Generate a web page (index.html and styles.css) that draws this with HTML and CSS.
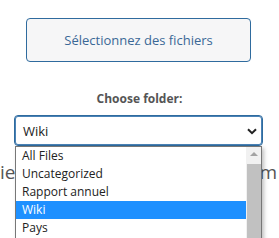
FILE: index.html
```html
<!DOCTYPE html>
<html lang="fr">
  <head>
    <meta charset="UTF-8" />
    <meta name="viewport" content="width=device-width, initial-scale=1.0" />
    <title>Upload</title>
    <link rel="stylesheet" href="styles.css">
  </head>
  <body>
    <div class="uploader">
      <button class="pick-btn">Sélectionnez des fichiers</button>

      <div class="folder">
        <label class="folder-label" for="folder">Choose folder:</label>
        <div class="select-box" id="folder">
          <span>Wiki</span>
          <svg class="chevron" width="10" height="7" viewBox="0 0 10 7">
            <path d="M1 1.2 L5 5.2 L9 1.2" fill="none" stroke="#222" stroke-width="2" />
          </svg>
        </div>

        <!-- open options list of the select -->
        <div class="options">
          <ul>
            <li>All Files</li>
            <li>Uncategorized</li>
            <li>Rapport annuel</li>
            <li class="selected">Wiki</li>
            <li>Pays</li>
          </ul>
          <div class="scrollbar">
            <span class="arrow"></span>
            <span class="thumb"></span>
          </div>
        </div>
      </div>

      <p class="hint"><span>ie</span><span>m</span></p>
    </div>
  </body>
</html>
```

FILE: styles.css
```css
* {
  margin: 0;
  padding: 0;
  box-sizing: border-box;
  font-family: "Open Sans", "Noto Sans", sans-serif;
}

body {
  background-color: white;
  width: 279px;
  height: 238px;
  overflow: hidden;
}

.uploader {
  padding-top: 18px;
}

.pick-btn {
  display: block;
  width: 225px;
  height: 44px;
  margin-left: 26px;
  background-color: #f6f6f7;
  border: 1px solid #2f6b9e;
  border-radius: 4px;
  color: #3a6896;
  font-size: 13px;
}

.folder {
  position: relative;
  margin-top: 29px;
}

.folder-label {
  display: block;
  text-align: center;
  font-size: 12px;
  font-weight: bold;
  color: #555;
  line-height: 16px;
  margin-bottom: 8px;
}

.select-box {
  display: flex;
  align-items: center;
  justify-content: space-between;
  margin-left: 14px;
  width: 249px;
  height: 31px;
  padding: 0 5px 0 8px;
  border: 1px solid #2f6b9e;
  box-shadow: inset 0 0 0 1px #4a82b6;
  border-radius: 4px;
  font-size: 13px;
  color: #222;
}

.chevron {
  margin-top: 1px;
}

.options {
  position: absolute;
  top: 55px;
  left: 15px;
  width: 247px;
  height: 100px;
  display: flex;
  background-color: white;
  border: 1px solid #777;
  border-bottom: none;
  box-shadow: 2px 2px 4px rgba(0, 0, 0, 0.25);
  z-index: 2;
}

.options ul {
  flex: 1;
  list-style: none;
}

.options li {
  height: 18px;
  line-height: 18px;
  padding-left: 6px;
  font-size: 12px;
  color: #222;
}

.options li.selected {
  background-color: #1e90ff;
  color: white;
}

.scrollbar {
  width: 15px;
  background-color: #f1f1f1;
  display: flex;
  flex-direction: column;
  align-items: center;
}

.arrow {
  margin-top: 5px;
  width: 0;
  height: 0;
  border-left: 4px solid transparent;
  border-right: 4px solid transparent;
  border-bottom: 4px solid #a3a3a3;
}

.thumb {
  margin-top: 8px;
  width: 14px;
  flex: 1;
  background-color: #c1c1c1;
}

.hint {
  display: flex;
  justify-content: space-between;
  margin-top: 14px;
  padding: 0 2px 0 0;
  font-size: 19px;
  color: #555;
  line-height: 24px;
}
```
